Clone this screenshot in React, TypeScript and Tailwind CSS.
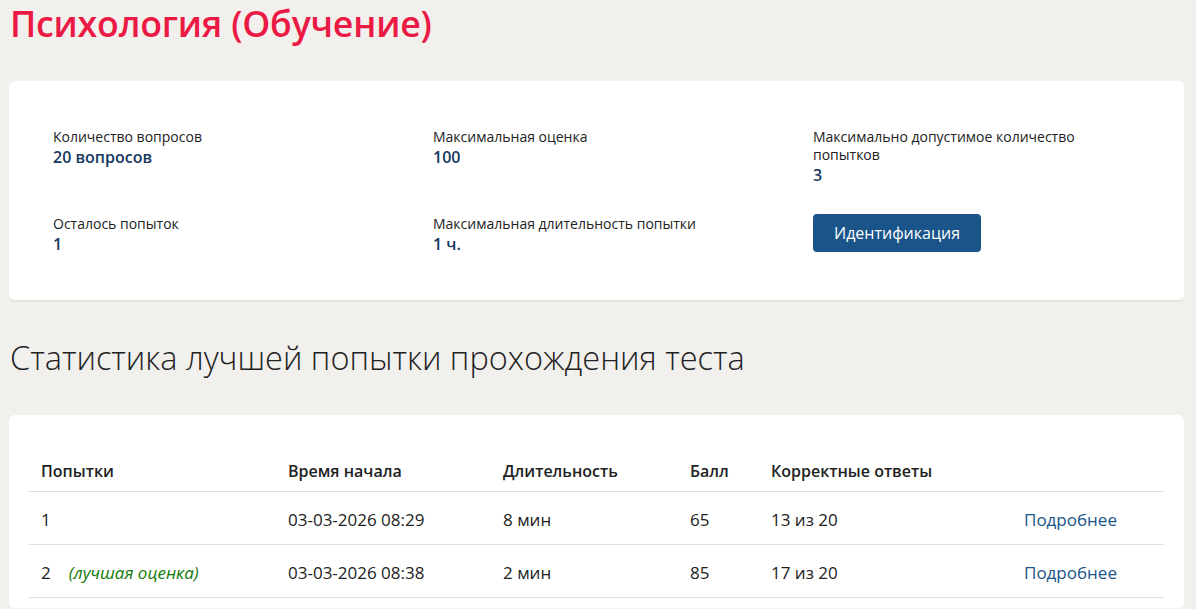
const rows = [
  { n: "1", best: false, start: "03-03-2026 08:29", dur: "8 мин", score: "65", correct: "13 из 20" },
  { n: "2", best: true, start: "03-03-2026 08:38", dur: "2 мин", score: "85", correct: "17 из 20" },
];

function Stat({ label, value }: { label: string; value: string }) {
  return (
    <div>
      <div className="text-[14px] leading-[18px] text-[#222]">{label}</div>
      <div className="text-[16px] leading-[22px] font-semibold text-[#16375f]">{value}</div>
    </div>
  );
}

export default function App() {
  return (
    <div
      className="min-h-screen bg-[#f2f0ed] pl-[9px] pr-[12px] text-[#222]"
      style={{ fontFamily: '"Open Sans", "Noto Sans", sans-serif' }}
    >
      <h1 className="pt-[1px] text-[35.7px] leading-[44px] font-semibold text-[#eb1a45] pl-[1px] tracking-[-0.2px]">
        Психология (Обучение)
      </h1>

      <div className="mt-[36px] rounded-[6px] bg-white border-b-2 border-[#e6e2dd] pl-[44px] pr-[44px] pt-[47px] pb-[45px]">
        <div className="grid grid-cols-[380px_380px_1fr] gap-y-[29px]">
          <Stat label="Количество вопросов" value="20 вопросов" />
          <Stat label="Максимальная оценка" value="100" />
          <Stat label="Максимально допустимое количество попытков" value="3" />
          <Stat label="Осталось попыток" value="1" />
          <Stat label="Максимальная длительность попытки" value="1 ч." />
          <div>
            <button className="-mt-[1px] h-[38px] rounded-[4px] bg-[#1a5489] px-[21px] text-[16px] text-white">
              Идентификация
            </button>
          </div>
        </div>
      </div>

      <h2 className="mt-[36px] text-[32.5px] leading-[40px] font-light text-[#222] pl-[1px]">
        Статистика лучшей попытки прохождения теста
      </h2>

      <div className="mt-[37px] rounded-[6px] bg-white px-[20px] pt-[37px] pb-[10px]">
        <table className="w-full border-collapse text-[17px] text-[#222]">
          <thead>
            <tr className="border-b border-[#dedede]">
              <th className="w-[247px] px-[12px] h-[39px] text-left text-[16px] font-semibold">Попытки</th>
              <th className="w-[215px] px-[12px] text-left text-[16px] font-semibold">Время начала</th>
              <th className="w-[187px] px-[12px] text-left text-[16px] font-semibold">Длительность</th>
              <th className="w-[81px] px-[12px] text-left text-[16px] font-semibold">Балл</th>
              <th className="w-[253px] px-[12px] text-left text-[16px] font-semibold">Корректные ответы</th>
              <th className="px-[12px]" />
            </tr>
          </thead>
          <tbody>
            {rows.map((r) => (
              <tr key={r.n} className="border-b border-[#dedede]">
                <td className="px-[12px] pt-[5px] h-[53px]">
                  {r.n}
                  {r.best && <span className="ml-[18px] italic text-[17px] text-[#13780a]">(лучшая оценка)</span>}
                </td>
                <td className="px-[12px] pt-[5px]">{r.start}</td>
                <td className="px-[12px] pt-[5px]">{r.dur}</td>
                <td className="px-[12px] pt-[5px]">{r.score}</td>
                <td className="px-[12px] pt-[5px]">{r.correct}</td>
                <td className="px-[12px] pt-[5px] text-[#1a5489]">Подробнее</td>
              </tr>
            ))}
          </tbody>
        </table>
      </div>
    </div>
  );
}
